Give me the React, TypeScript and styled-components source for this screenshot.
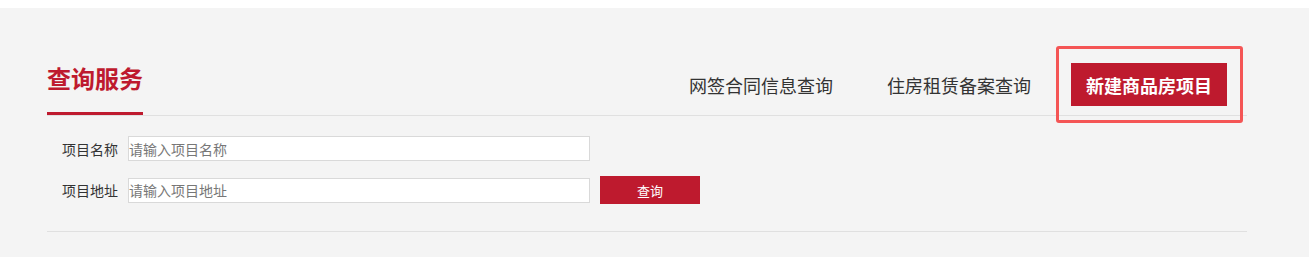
import styled, { createGlobalStyle } from 'styled-components';

const GlobalStyle = createGlobalStyle`
  html, body {
    margin: 0;
    padding: 0;
    background: #ffffff;
    font-family: "Noto Sans CJK SC", "Liberation Sans", sans-serif;
  }
  #root {
    padding-top: 8px;
  }
`;

const Section = styled.section`
  background: #f4f4f4;
  padding: 38px 0 25px;
`;

const Container = styled.div`
  width: 1200px;
  margin: 0 47px;
`;

const Header = styled.div`
  display: flex;
  justify-content: space-between;
  align-items: flex-end;
  border-bottom: 1px solid #e0e0e0;
`;

const Title = styled.h2`
  margin: 0;
  font-size: 24px;
  line-height: 24px;
  font-weight: 700;
  color: #be1a2e;
  padding-bottom: 22px;
  border-bottom: 3px solid #be1a2e;
`;

const Nav = styled.nav`
  display: flex;
  align-items: center;
  margin-bottom: -8px;
  margin-right: 4px;
`;

const Tab = styled.a`
  font-size: 18px;
  color: #333333;
  text-decoration: none;
  padding: 0 25px 0 29px;
  cursor: pointer;
`;

const Highlight = styled.div`
  border: 3px solid #f45555;
  border-radius: 3px;
  padding: 14px 13px 14px 12px;
`;

const ActiveTab = styled.a`
  display: flex;
  align-items: center;
  height: 43px;
  padding: 0 15px;
  background: #be1a2e;
  color: #ffffff;
  font-size: 18px;
  font-weight: 700;
  text-decoration: none;
  cursor: pointer;
`;

const Form = styled.form`
  display: flex;
  flex-direction: column;
  gap: 15px;
  padding: 20px 0 27px 15px;
  border-bottom: 1px solid #e0e0e0;
`;

const Row = styled.div`
  display: flex;
  align-items: center;
`;

const Label = styled.label`
  font-size: 14px;
  color: #333333;
  margin-right: 10px;
`;

const Input = styled.input`
  box-sizing: border-box;
  width: 462px;
  height: 25px;
  border: 1px solid #d9d9d9;
  background: #ffffff;
  padding: 0;
  font-family: "Noto Sans CJK SC", "Liberation Sans", sans-serif;
  font-size: 14px;
  color: #333333;
  outline: none;

  &::placeholder {
    color: #777777;
  }
`;

const SearchButton = styled.button`
  width: 100px;
  height: 28px;
  margin-left: 10px;
  border: none;
  background: #be1a2e;
  color: #ffffff;
  font-family: "Noto Sans CJK SC", "Liberation Sans", sans-serif;
  font-size: 13px;
  cursor: pointer;
`;

const fields = [
  { label: '项目名称', placeholder: '请输入项目名称' },
  { label: '项目地址', placeholder: '请输入项目地址' },
];

export default function App() {
  return (
    <>
      <GlobalStyle />
      <Section>
        <Container>
          <Header>
            <Title>查询服务</Title>
            <Nav>
              <Tab>网签合同信息查询</Tab>
              <Tab>住房租赁备案查询</Tab>
              <Highlight>
                <ActiveTab>新建商品房项目</ActiveTab>
              </Highlight>
            </Nav>
          </Header>
          <Form onSubmit={(e) => e.preventDefault()}>
            {fields.map((f, i) => (
              <Row key={f.label}>
                <Label>{f.label}</Label>
                <Input placeholder={f.placeholder} />
                {i === fields.length - 1 && <SearchButton type="submit">查询</SearchButton>}
              </Row>
            ))}
          </Form>
        </Container>
      </Section>
    </>
  );
}
